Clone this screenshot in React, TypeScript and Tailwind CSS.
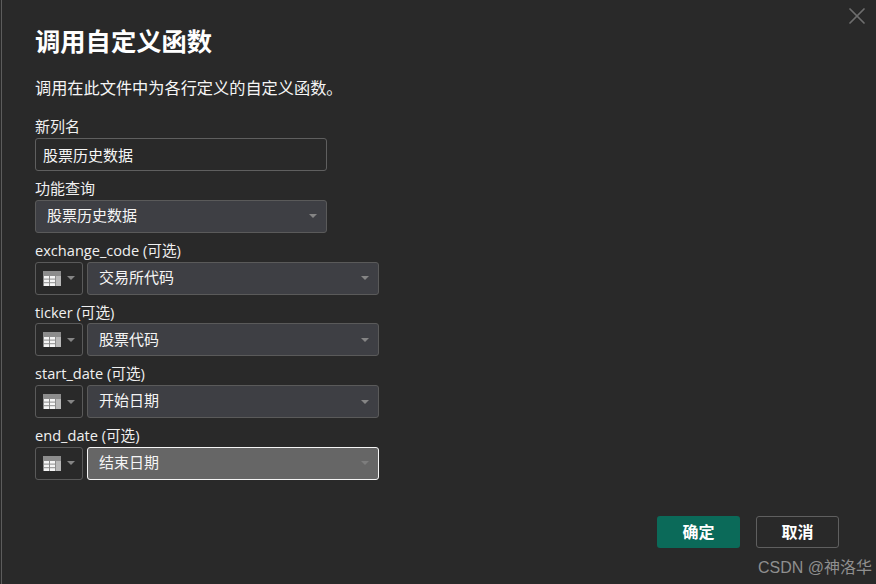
import { X } from 'lucide-react';

const FONT = "font-['Open_Sans','Noto_Sans_CJK_SC',sans-serif]";

function TableIcon() {
  return (
    <svg width="18" height="15" viewBox="0 0 18 15" className="shrink-0">
      <rect width="18" height="15" fill="#8c8c8c" />
      <rect x="1" y="5" width="5" height="2.6" fill="#f5f5f5" />
      <rect x="7" y="5" width="5" height="2.6" fill="#f5f5f5" />
      <rect x="1" y="8.6" width="5" height="2.6" fill="#f5f5f5" />
      <rect x="7" y="8.6" width="5" height="2.6" fill="#f5f5f5" />
      <rect x="1" y="12.2" width="5" height="2.8" fill="#f5f5f5" />
      <rect x="7" y="12.2" width="5" height="2.8" fill="#f5f5f5" />
      <rect x="13" y="5" width="5" height="10" fill="#b8b8b8" />
    </svg>
  );
}

function Caret({ className }: { className: string }) {
  return <span className={`w-0 h-0 border-x-[4px] border-x-transparent border-t-[4px] ${className}`} />;
}

function Label({ children }: { children: React.ReactNode }) {
  return <div className="h-[23px] flex items-center text-[14.6px] text-[#f0f0f0] leading-none">{children}</div>;
}

function Select({ value, active }: { value: string; active?: boolean }) {
  return (
    <div
      className={`w-[292px] h-[33px] rounded-[3px] border pl-[11px] pr-[9px] flex items-center justify-between text-[15px] ${
        active ? 'bg-[#666666] border-[#f5f5f5]' : 'bg-[#3e3f44] border-[#5a5a5a]'
      } text-[#f5f5f5]`}
    >
      <span className="pb-[2px]">{value}</span>
      <Caret className={active ? 'border-t-[#7d7d7d]' : 'border-t-[#858585]'} />
    </div>
  );
}

function ParamRow({ label, value, active }: { label: string; value: string; active?: boolean }) {
  return (
    <div className="mb-[5.8px]">
      <Label>
        {label} (可选)
      </Label>
      <div className="flex gap-[4px]">
        <div className="w-[48px] h-[33px] rounded-[3px] border border-[#5a5a5a] flex items-center pl-[7px] gap-[6px]">
          <TableIcon />
          <Caret className="border-t-[#858585]" />
        </div>
        <Select value={value} active={active} />
      </div>
    </div>
  );
}

export default function App() {
  return (
    <div className={`relative w-[876px] h-[584px] overflow-hidden bg-[#292929] pl-[35px] pt-[23px] ${FONT}`}>
      <div className="absolute left-[1px] top-0 bottom-0 w-px bg-[#5c5c5c]" />
      <X className="absolute right-[5px] top-[2px] w-[28px] h-[28px] text-[#6e6e6e]" strokeWidth={1.5} />

      <h1 className="h-[36px] pt-[2px] flex items-center text-[25.3px] font-bold text-white leading-none">调用自定义函数</h1>
      <p className="mt-[17px] h-[24px] flex items-center text-[16.2px] text-[#f5f5f5] leading-none">调用在此文件中为各行定义的自定义函数。</p>

      <div className="mt-[15px]">
        <div className="mb-[5.8px]">
          <Label>
            <span className="text-[15px]">新列名</span>
          </Label>
          <div className="w-[292px] h-[33px] rounded-[3px] border border-[#5f5f5f] pl-[7px] flex items-center text-[15px] text-[#f5f5f5]">
            <span className="pt-[1px]">股票历史数据</span>
          </div>
        </div>
        <div className="mb-[5.8px]">
          <Label>
            <span className="text-[15px]">功能查询</span>
          </Label>
          <Select value="股票历史数据" />
        </div>
        <ParamRow label="exchange_code" value="交易所代码" />
        <ParamRow label="ticker" value="股票代码" />
        <ParamRow label="start_date" value="开始日期" />
        <ParamRow label="end_date" value="结束日期" active />
      </div>

      <div className="mt-[36px] ml-[622px] flex gap-[16px]">
        <button className="w-[83px] h-[32px] rounded-[3px] bg-[#0b6a59] text-white text-[16px] font-bold">确定</button>
        <button className="w-[83px] h-[32px] rounded-[3px] border border-[#5f5f5f] text-white text-[16px] font-bold">取消</button>
      </div>

      <div className="absolute right-[4px] bottom-[5px] text-[16px] leading-[22px] text-[#8f8f8f] font-['Liberation_Sans','Noto_Sans_CJK_SC',sans-serif]">
        CSDN @神洛华
      </div>
    </div>
  );
}
